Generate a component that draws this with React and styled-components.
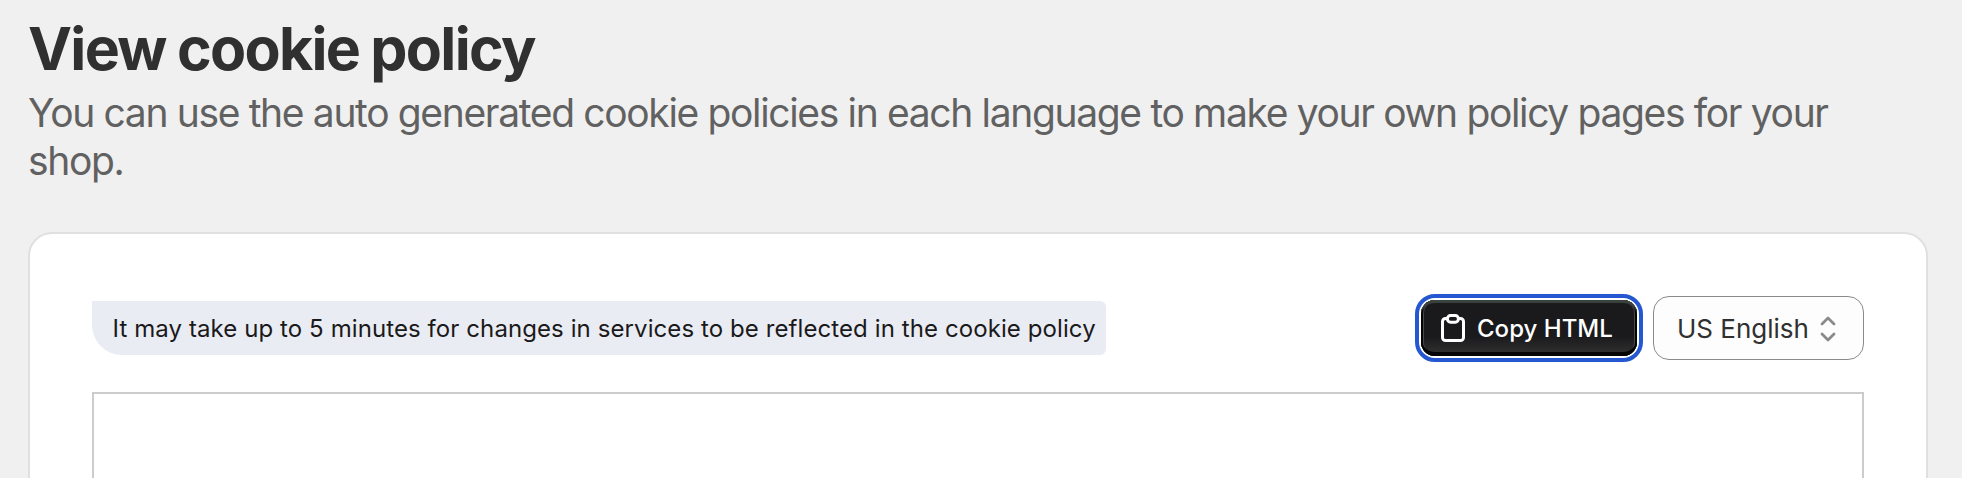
import React from "react";
import styled, { createGlobalStyle } from "styled-components";

const GlobalStyle = createGlobalStyle`
  *, *::before, *::after { box-sizing: border-box; }
  body {
    margin: 0;
    background: #f0f0f0;
    font-family: Inter, "Liberation Sans", sans-serif;
    overflow: hidden;
  }
`;

const Page = styled.main`
  height: 478px;
  padding: 20px 34px 0 28px;
  overflow: hidden;
`;

const Title = styled.h1`
  margin: 0;
  font-size: 59px;
  line-height: 58px;
  font-weight: 700;
  letter-spacing: -1.68px;
  word-spacing: -1.2px;
  color: #303030;
`;

const Subtitle = styled.p`
  margin: 11px 0 0;
  font-size: 39px;
  line-height: 48px;
  font-weight: 400;
  letter-spacing: -1.345px;
  color: #616161;
`;

const Card = styled.section`
  margin-top: 47px;
  height: 320px;
  padding: 62px 62px 0;
  background: #fff;
  border: 2px solid #e0e0e0;
  border-radius: 24px;
`;

const Toolbar = styled.div`
  display: flex;
  align-items: center;
  height: 64px;
`;

const Notice = styled.div`
  height: 54px;
  width: 1014px;
  margin-right: auto;
  padding: 1px 0 0 20.5px;
  border-radius: 0 6px 6px 30px;
  background: #eaecf4;
  color: #1a1a1a;
  font-size: 24px;
  line-height: 54px;
  letter-spacing: 0.09px;
  white-space: nowrap;
`;

const CopyButton = styled.button`
  display: flex;
  align-items: center;
  gap: 9px;
  width: 216px;
  height: 56px;
  margin: 0 16px 0 0;
  padding: 0 0 0 17px;
  border: 0;
  border-radius: 14px;
  outline: 4px solid #2558d0;
  outline-offset: 2px;
  background: linear-gradient(#1a1a1d 65%, #333 100%);
  box-shadow:
    inset 0 4px 1px -1px #3c443f,
    inset 0 -4px 0 #050505,
    inset 2px 0 0 #050505,
    inset -2px 0 0 #050505,
    inset 3px 0 0 #48484a,
    inset -3px 0 0 #48484a;
  color: #fff;
  font: 500 24px/56px Inter, sans-serif;
  letter-spacing: 0.02px;
  white-space: nowrap;
`;

const ButtonLabel = styled.span`
  padding-top: 2px;
`;

const Select = styled.button`
  display: flex;
  align-items: center;
  justify-content: space-between;
  width: 211px;
  height: 64px;
  padding: 1px 27px 0 23px;
  border: 1px solid #8a8a8a;
  border-radius: 16px;
  background: #fdfdfd;
  color: #303030;
  font: 400 26px/60px Inter, sans-serif;
  white-space: nowrap;
`;

const Preview = styled.div`
  height: 120px;
  margin-top: 32px;
  border: 2px solid #ccc;
`;

const ClipboardIcon = () => (
  <svg width="30" height="32" viewBox="0 0 30 32" fill="none" stroke="#fff" strokeWidth="3">
    <path d="M9.5 6.4H7.5a3 3 0 0 0-3 3v16.1a3 3 0 0 0 3 3h15a3 3 0 0 0 3-3V9.4a3 3 0 0 0-3-3h-2" />
    <rect x="9.4" y="3.6" width="11" height="6.6" rx="3.1" />
  </svg>
);

const SelectIcon = () => (
  <svg width="16" height="26" viewBox="0 0 16 26" fill="none" stroke="#8a8a8a" strokeWidth="2.8" strokeLinecap="round" strokeLinejoin="round">
    <path d="M2 8 8 2l6 6M2 18l6 6 6-6" />
  </svg>
);

export default function App() {
  return (
    <>
      <GlobalStyle />
      <Page>
        <Title>View cookie policy</Title>
        <Subtitle>
          You can use the auto generated cookie policies in each language to make your own policy pages for your shop.
        </Subtitle>
        <Card>
          <Toolbar>
            <Notice>It may take up to 5 minutes for changes in services to be reflected in the cookie policy</Notice>
            <CopyButton type="button">
              <ClipboardIcon />
              <ButtonLabel>Copy HTML</ButtonLabel>
            </CopyButton>
            <Select type="button">
              US English
              <SelectIcon />
            </Select>
          </Toolbar>
          <Preview />
        </Card>
      </Page>
    </>
  );
}
